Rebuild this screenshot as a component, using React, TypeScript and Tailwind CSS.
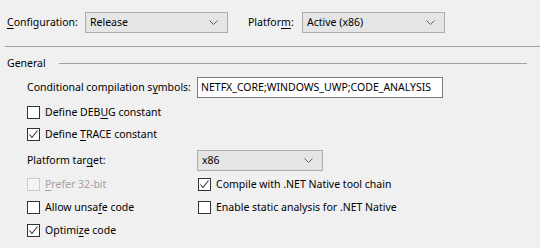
import React from "react";

function Key({ children }: { children: React.ReactNode }) {
  return <span className="underline underline-offset-2">{children}</span>;
}

function Chevron() {
  return (
    <svg width="9" height="5" viewBox="0 0 9 5" className="shrink-0">
      <path d="M0.5 0.5 L4.5 4.5 L8.5 0.5" fill="none" stroke="#606060" strokeWidth="1" />
    </svg>
  );
}

function Combo({ value, width }: { value: string; width: string }) {
  return (
    <div
      className={`${width} flex h-[21px] items-center justify-between border border-[#adadad] bg-[#e5e5e5] pl-[4px] pr-[9px]`}
    >
      <span>{value}</span>
      <Chevron />
    </div>
  );
}

function Check({ checked, disabled }: { checked?: boolean; disabled?: boolean }) {
  return (
    <span
      className={`flex h-[13px] w-[13px] shrink-0 items-center justify-center border ${
        disabled ? "border-[#cccccc] bg-[#f4f4f4]" : "border-[#333333] bg-white"
      }`}
    >
      {checked && (
        <svg width="11" height="11" viewBox="0 0 11 11">
          <path d="M1.5 5.5 L4 8.5 L9.5 1.5" fill="none" stroke="#333333" strokeWidth="1.1" />
        </svg>
      )}
    </span>
  );
}

function CheckRow({
  checked,
  disabled,
  children,
}: {
  checked?: boolean;
  disabled?: boolean;
  children: React.ReactNode;
}) {
  return (
    <div className={`flex h-[13px] items-center gap-[5px] ${disabled ? "text-[#a0a0a0]" : ""}`}>
      <Check checked={checked} disabled={disabled} />
      <span>{children}</span>
    </div>
  );
}

export default function App() {
  return (
    <div
      className="h-[248px] w-[540px] overflow-hidden whitespace-nowrap bg-[#f0f0f0] text-[10.5px] leading-[15px] text-black"
      style={{ fontFamily: '"Noto Sans", "Open Sans", sans-serif' }}
    >
      <div className="flex items-center pt-[12px] pl-[7px]">
        <span className="w-[78px]">
          <Key>C</Key>onfiguration:
        </span>
        <Combo value="Release" width="w-[143px]" />
        <span className="ml-[20px] w-[54px]">
          Platfor<Key>m</Key>:
        </span>
        <Combo value="Active (x86)" width="w-[143px]" />
      </div>

      <div className="ml-[5px] mt-[13px] h-px bg-[#a0a0a0]" />

      <div className="mt-[9px] flex h-[15px] items-center pl-[7px] pr-[13px]">
        <span>General</span>
        <div className="ml-[13px] h-px flex-1 bg-[#a0a0a0]" />
      </div>

      <div className="mt-[6px] flex items-center pl-[27px]">
        <span className="w-[170px]">
          Conditional compilation s<Key>y</Key>mbols:
        </span>
        <div className="flex h-[21px] w-[246px] items-center border border-[#7a7a7a] bg-white pl-[3px]">
          NETFX_CORE;WINDOWS_UWP;CODE_ANALYSIS
        </div>
      </div>

      <div className="mt-[8px] pl-[27px]">
        <CheckRow>
          Define DEB<Key>U</Key>G constant
        </CheckRow>
      </div>
      <div className="mt-[9px] pl-[27px]">
        <CheckRow checked>
          Define <Key>T</Key>RACE constant
        </CheckRow>
      </div>

      <div className="mt-[9px] flex items-center pl-[27px]">
        <span className="w-[170px]">
          Platform tar<Key>g</Key>et:
        </span>
        <Combo value="x86" width="w-[126px]" />
      </div>

      <div className="mt-[7px] grid grid-cols-[171px_1fr] gap-y-[10px] pl-[27px]">
        <CheckRow disabled>
          <Key>P</Key>refer 32-bit
        </CheckRow>
        <CheckRow checked>Compile with .NET Native tool chain</CheckRow>
        <CheckRow>
          Allow unsa<Key>f</Key>e code
        </CheckRow>
        <CheckRow>Enable static analysis for .NET Native</CheckRow>
        <CheckRow checked>
          Optimi<Key>z</Key>e code
        </CheckRow>
      </div>
    </div>
  );
}
